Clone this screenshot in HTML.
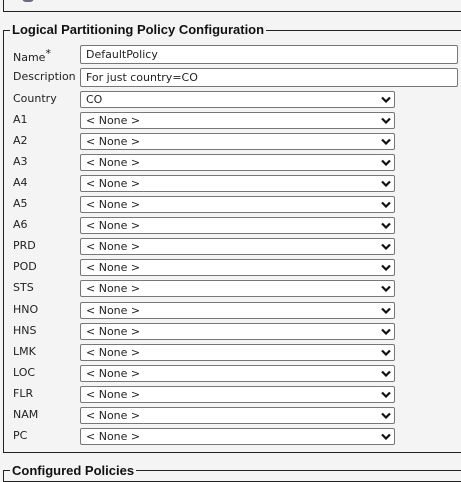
<!DOCTYPE html><html><head><style>
body{margin:0;width:461px;height:471px;background:#f4f4f4;position:relative;overflow:hidden;font-family:"DejaVu Sans",sans-serif;font-size:11px;color:#222}
.a{position:absolute}
.lbl{position:absolute;left:13px;font-size:11px}
.inp{position:absolute;left:80px;width:378px;height:17px;border:1px solid #777;border-radius:2px;background:#fff;box-sizing:border-box;padding-left:5px;line-height:17px}
.sel{position:absolute;left:80px;width:315px;height:17px;border:1px solid #777;border-radius:2px;background:#fff;box-sizing:border-box;padding-left:5px;line-height:16px}
.sel svg{position:absolute;right:3px;top:4px}
.lg{position:absolute;background:#f4f4f4;padding:0 2px;font-weight:bold;font-size:13px;color:#111;font-family:"Liberation Sans",sans-serif}
</style></head><body>
<div class="a" style="left:3px;top:-5px;width:470px;height:16px;border:1px solid #222;border-top:none"></div>
<div class="a" style="left:22px;top:-6px;width:12px;height:8px;border-radius:6px;background:#6a6a80"></div>
<div class="a" style="left:3px;top:30px;width:470px;height:421px;border:1px solid #222"></div>
<div class="lg" style="left:10px;top:22px">Logical Partitioning Policy Configuration</div>
<div class="lbl" style="top:47px">Name<sup style="font-size:11px;vertical-align:4px">*</sup></div>
<div class="inp" style="top:45px;height:19px">DefaultPolicy</div>
<div class="lbl" style="top:70px">Description</div>
<div class="inp" style="top:68px;height:19px">For just country=CO</div>
<div id="rows"></div>
<script>
var L=["Country","A1","A2","A3","A4","A5","A6","PRD","POD","STS","HNO","HNS","LMK","LOC","FLR","NAM","PC"],h="";
L.forEach(function(n,i){var y=91+i*21.05;h+='<div class="lbl" style="top:'+(y+1)+'px">'+n+'</div><div class="sel" style="top:'+y+'px">'+(i?'&lt; None &gt;':'CO')+'<svg width="10" height="7" viewBox="0 0 10 7"><path d="M1 1.5L5 5.5L9 1.5" stroke="#111" stroke-width="2.2" fill="none"/></svg></div>';});
document.getElementById('rows').innerHTML=h;
</script>
<div class="a" style="left:3px;top:470px;width:470px;height:10px;border:1px solid #222"></div>
<div class="lg" style="left:10px;top:463px">Configured Policies</div>
</body></html>
